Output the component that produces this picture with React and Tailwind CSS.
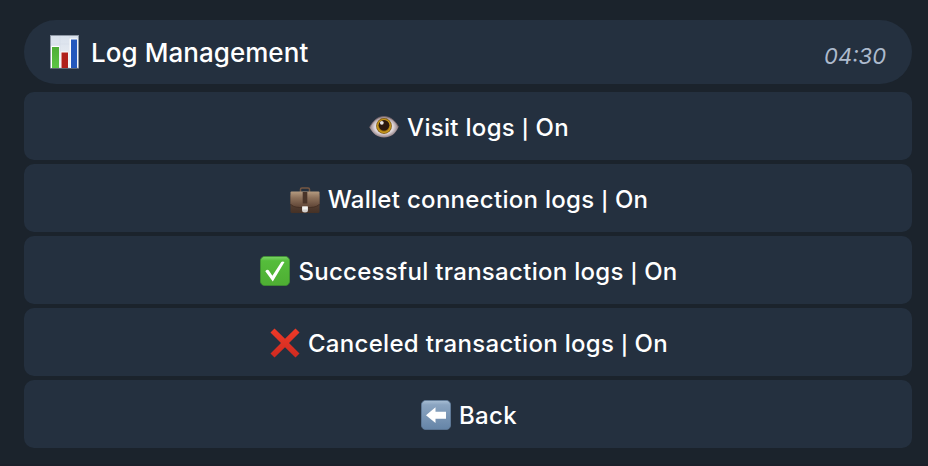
function ChartIcon() {
  return (
    <svg viewBox="0 0 30 34" className="w-[30px] h-[34px] shrink-0">
      <defs>
        <linearGradient id="chart-paper" x1="0" y1="0" x2="0" y2="1">
          <stop offset="0" stopColor="#d9e1ec" />
          <stop offset="1" stopColor="#eef1f5" />
        </linearGradient>
        <linearGradient id="chart-green" x1="0" y1="0" x2="0" y2="1">
          <stop offset="0" stopColor="#4fae37" />
          <stop offset="1" stopColor="#5cc544" />
        </linearGradient>
      </defs>
      <rect x="0.5" y="0.5" width="28" height="32.5" fill="url(#chart-paper)" stroke="#8f98a5" />
      <path d="M10 1v32M19.500 1v32M1 9h27M1 17h27M1 25h27" stroke="#d3dae5" strokeWidth="0.5" />
      <path d="M1 11h8.500v22H1zM10.500 16.500h8v16.500h-8zM19.500 3.500h8v29.500h-8z" fill="#fff" />
      <rect x="2" y="12" width="7" height="21" fill="url(#chart-green)" />
      <rect x="11.500" y="17.500" width="6.500" height="15.500" fill="#b1201b" />
      <rect x="21" y="4.500" width="6" height="28.500" fill="#2458bd" />
    </svg>
  );
}

function EyeIcon() {
  return (
    <svg viewBox="0 0 30 30" className="w-[30px] h-[30px] shrink-0">
      <defs>
        <radialGradient id="eye-white" cx="0.5" cy="0.5" r="0.5">
          <stop offset="0" stopColor="#fff" />
          <stop offset="0.65" stopColor="#ded6da" />
          <stop offset="1" stopColor="#8d797d" />
        </radialGradient>
        <radialGradient id="eye-iris" cx="0.5" cy="0.5" r="0.5">
          <stop offset="0.5" stopColor="#6b4304" />
          <stop offset="0.8" stopColor="#cf9f1e" />
          <stop offset="1" stopColor="#6d4a0e" />
        </radialGradient>
      </defs>
      <path d="M0.500 15.500C4 9 8.500 4.500 15 4.500S26.500 9 29.500 15c-3 7-8 10.500-14.500 10.500S4 22 0.500 15.500z" fill="url(#eye-white)" />
      <path d="M0.500 15.500C4 9 8.500 4.500 15 4.500S26.500 9 29.500 15" fill="none" stroke="#75646a" strokeWidth="0.8" />
      <circle cx="15" cy="14" r="7.900" fill="url(#eye-iris)" />
      <circle cx="15" cy="13.300" r="5.300" fill="#2c190e" />
      <circle cx="12.800" cy="10.800" r="1.900" fill="#e9e4e2" />
    </svg>
  );
}

function BriefcaseIcon() {
  return (
    <svg viewBox="0 0 30 30" className="w-[30px] h-[30px] shrink-0">
      <defs>
        <linearGradient id="case-flap" x1="0" y1="0" x2="0" y2="1">
          <stop offset="0" stopColor="#b59b80" />
          <stop offset="0.4" stopColor="#8c705a" />
          <stop offset="1" stopColor="#5e4435" />
        </linearGradient>
        <linearGradient id="case-body" x1="0" y1="0" x2="0" y2="1">
          <stop offset="0" stopColor="#6a5040" />
          <stop offset="1" stopColor="#453126" />
        </linearGradient>
      </defs>
      <path d="M10.500 8V5.200Q10.500 3.900 12 3.900h6q1.500 0 1.500 1.300V8" fill="none" stroke="#755743" strokeWidth="1.500" />
      <rect x="0.500" y="10" width="29" height="19" rx="1.500" fill="url(#case-body)" />
      <path d="M1.500 7.500h27q1 0 1 1v11.500q-2 3-9 3.500h-11q-7-.5-9-3.500V8.500q0-1 1-1z" fill="url(#case-flap)" />
      <path d="M0.500 20q2 3 9 3.500h11q7-.5 9-3.500" fill="none" stroke="#3d2a20" strokeWidth="0.700" />
      <rect x="12.700" y="8" width="4.600" height="11.500" fill="#4a3428" />
      <path d="M12 22.500h6v3.500q0 2.500-3 2.500t-3-2.500z" fill="#d5d1ce" />
      <path d="M12.500 22.500h5v3h-5z" fill="#f5f4f3" />
    </svg>
  );
}

function CheckIcon() {
  return (
    <svg viewBox="0 0 30 30" className="w-[30px] h-[30px] shrink-0">
      <defs>
        <linearGradient id="check-bg" x1="0" y1="0" x2="0" y2="1">
          <stop offset="0" stopColor="#7fd66a" />
          <stop offset="0.15" stopColor="#55bd3b" />
          <stop offset="1" stopColor="#4eae33" />
        </linearGradient>
      </defs>
      <rect x="0.400" y="0.400" width="29.200" height="29.200" rx="4.500" fill="url(#check-bg)" stroke="#3f9430" strokeWidth="0.800" />
      <path d="M5.300 15.200q1.700-2 3.400-1l3.700 5.600L21.300 6q1.300-1 3.200 0L12.800 25.500z" fill="#fff" />
    </svg>
  );
}

function CrossIcon() {
  return (
    <svg viewBox="0 0 30 30" className="w-[30px] h-[30px] shrink-0">
      <defs>
        <linearGradient id="cross-red" x1="0" y1="0" x2="0" y2="1">
          <stop offset="0" stopColor="#ee3a28" />
          <stop offset="1" stopColor="#cf2a20" />
        </linearGradient>
      </defs>
      <path d="M4.500 0.500L15 10.800 25.500 0.500l4 4L19 15l10.500 10.500-4 4L15 19.200 4.500 29.500l-4-4L11 15 0.500 4.500z" fill="url(#cross-red)" />
    </svg>
  );
}

function BackIcon() {
  return (
    <svg viewBox="0 0 30 30" className="w-[30px] h-[30px] shrink-0">
      <defs>
        <linearGradient id="back-bg" x1="0" y1="0" x2="0" y2="1">
          <stop offset="0" stopColor="#a9bfd5" />
          <stop offset="0.15" stopColor="#8ba5c1" />
          <stop offset="1" stopColor="#6584a7" />
        </linearGradient>
      </defs>
      <rect x="0.400" y="0.400" width="29.200" height="29.200" rx="4.500" fill="url(#back-bg)" stroke="#627e9d" strokeWidth="0.800" />
      <path d="M5 15.200l9.500-7.900v4.400H25v7H14.500v4.400z" fill="#fff" />
    </svg>
  );
}

const BUTTONS = [
  { label: 'Visit logs', state: 'On', Icon: EyeIcon },
  { label: 'Wallet connection logs', state: 'On', Icon: BriefcaseIcon },
  { label: 'Successful transaction logs', state: 'On', Icon: CheckIcon },
  { label: 'Canceled transaction logs', state: 'On', Icon: CrossIcon },
  { label: 'Back', Icon: BackIcon },
];

export default function App() {
  return (
    <div className="h-[466px] w-[928px] bg-[#1b232c] border-b-2 border-[#1b202a] pt-5 pl-6 pr-4 font-['Inter',sans-serif] text-white">
      <header className="h-16 rounded-full bg-[#24303f] flex items-center pl-[26px] pr-[26px]">
        <ChartIcon />
        <h1 className="ml-[11px] mt-0.5 text-[26px] leading-8 font-medium tracking-[0.05px]">Log Management</h1>
        <time className="ml-auto mt-2 text-[22px] leading-7 italic text-[#adbacd]">04:30</time>
      </header>

      <div className="mt-2 flex flex-col gap-1">
        {BUTTONS.map(({ label, state, Icon }) => (
          <button
            key={label}
            type="button"
            className="h-[68px] rounded-[10px] bg-[#24303f] flex items-center justify-center gap-2 pt-0.5 pl-0.5 text-2xl font-medium tracking-[0.3px]"
          >
            <Icon />
            <span className="pt-0.5">
              {label}
              {state && (
                <>
                  {' '}
                  <span className="inline-block w-[7px] text-center text-[19px] leading-none font-semibold tracking-normal">|</span>
                  {' '}{state}
                </>
              )}
            </span>
          </button>
        ))}
      </div>
    </div>
  );
}
